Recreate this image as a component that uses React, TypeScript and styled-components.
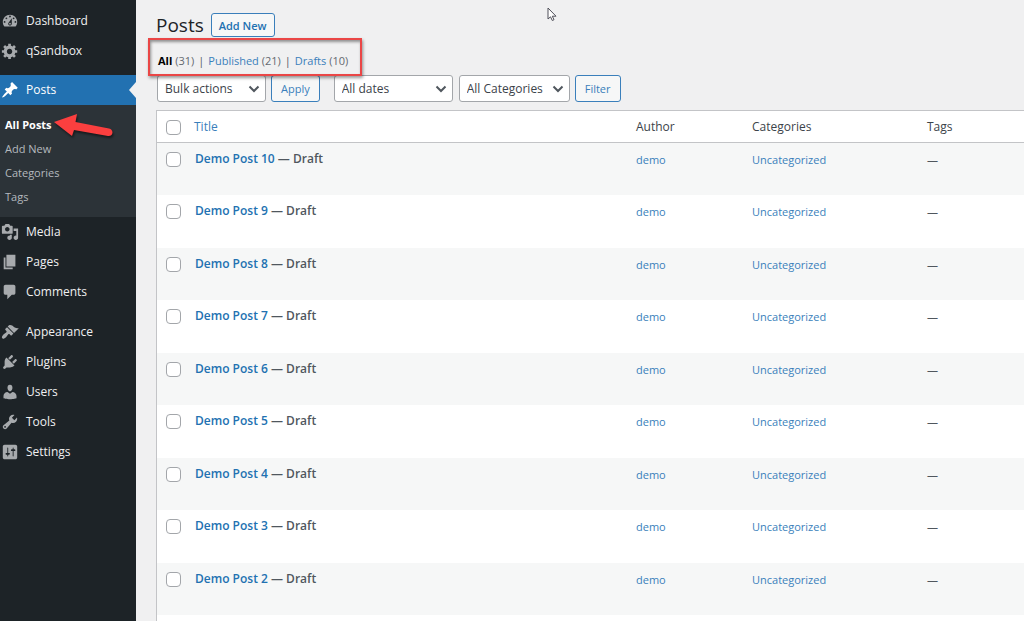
import React from "react";
import styled, { createGlobalStyle, css } from "styled-components";

const GlobalStyle = createGlobalStyle`
  *, *::before, *::after { box-sizing: border-box; }
  body {
    margin: 0;
    background: #f0f0f1;
    color: #50575e;
    font-family: "Open Sans", "Noto Sans", sans-serif;
    font-size: 12px;
    line-height: 18px;
  }
  a { color: #3a7fbb; text-decoration: none; }
`;

const Page = styled.div`
  position: relative;
  display: flex;
  min-height: 100vh;
  overflow: hidden;
`;

const Sidebar = styled.nav`
  flex: none;
  width: 136px;
  padding-top: 6px;
  background: #1d2327;
`;

const Menu = styled.ul`
  list-style: none;
  margin: 0;
  padding: 0;
`;

const MenuItem = styled.li<{ $gap?: number }>`
  margin-top: ${(p) => p.$gap ?? 0}px;
`;

const MenuLink = styled.a<{ $current?: boolean }>`
  position: relative;
  display: flex;
  align-items: center;
  gap: 7px;
  height: 30px;
  padding-left: 1px;
  color: #f0f0f1;
  font-size: 12px;
  svg {
    width: 18px;
    height: 18px;
    fill: #a7aaad;
  }
  ${(p) =>
    p.$current &&
    css`
      background: #2271b1;
      color: #fff;
      svg { fill: #fff; }
      &::after {
        content: "";
        position: absolute;
        top: 7px;
        right: 0;
        border: 8px solid transparent;
        border-left: 0;
        border-right: 7px solid #f0f0f1;
      }
    `}
`;

const SubMenu = styled.ul`
  position: relative;
  list-style: none;
  margin: 0;
  padding: 8px 0;
  background: #2c3338;
`;

const SubItem = styled.li`
  display: flex;
  align-items: center;
  height: 24px;
  padding-left: 5px;
`;

const SubLink = styled.a<{ $current?: boolean }>`
  color: ${(p) => (p.$current ? "#fff" : "#b4b9be")};
  font-size: 11px;
  font-weight: ${(p) => (p.$current ? 700 : 400)};
`;

const Arrow = styled.svg`
  position: absolute;
  top: 6px;
  left: 52px;
  width: 66px;
  height: 32px;
  filter: drop-shadow(1px 2px 1px rgba(0, 0, 0, 0.5));
`;

const Main = styled.main`
  flex: 1;
  display: flex;
  flex-direction: column;
  min-width: 0;
  padding: 12px 0 0 20px;
`;

const Heading = styled.header`
  display: flex;
  align-items: center;
  gap: 7px;
  height: 26px;
`;

const Title = styled.h1`
  margin: 0;
  color: #1d2327;
  font-size: 19px;
  font-weight: 400;
  line-height: 26px;
`;

const AddNew = styled.a`
  height: 24px;
  padding: 0 7px;
  border: 1px solid #3a7fbb;
  border-radius: 3px;
  background: #f6f7f7;
  color: #2271b1;
  font-size: 11px;
  font-weight: 600;
  line-height: 23px;
`;

const Views = styled.nav`
  position: relative;
  align-self: flex-start;
  display: flex;
  gap: 4px;
  margin-top: 14px;
  padding-left: 2px;
  font-size: 11px;
  &::after {
    content: "";
    position: absolute;
    z-index: 1;
    inset: -14px -14px -6px -8px;
    border: 2px solid #ea4646;
    box-shadow: 1px 2px 3px rgba(0, 0, 0, 0.4), inset 1px 2px 3px rgba(0, 0, 0, 0.4);
    pointer-events: none;
  }
`;

const View = styled.span<{ $current?: boolean }>`
  color: #646970;
  a {
    color: ${(p) => (p.$current ? "#000" : "#3a7fbb")};
    font-weight: ${(p) => (p.$current ? 700 : 400)};
  }
`;

const Toolbar = styled.form`
  display: flex;
  margin-top: 5px;
  padding-left: 1px;
`;

const SelectBox = styled.span<{ $width: number; $before?: number }>`
  position: relative;
  width: ${(p) => p.$width}px;
  margin-left: ${(p) => p.$before ?? 0}px;
  svg {
    position: absolute;
    top: 9px;
    right: 6px;
    width: 12px;
    height: 10px;
    pointer-events: none;
  }
`;

const Select = styled.select`
  appearance: none;
  width: 100%;
  height: 27px;
  padding: 0 20px 0 7px;
  border: 1px solid #a3a6aa;
  border-radius: 3px;
  background: #fff;
  color: #3c434a;
  font-family: inherit;
  font-size: 12px;
`;

const Button = styled.button`
  height: 27px;
  margin-left: 5px;
  padding: 0 9px;
  border: 1px solid #3a7fbb;
  border-radius: 3px;
  background: #f6f7f7;
  color: #3a7fbb;
  font-family: inherit;
  font-size: 11px;
`;

const TableCard = styled.div`
  flex: 1;
  margin-top: 8px;
  border: 1px solid #c3c4c7;
  border-width: 1px 0 0 1px;
  background: #fff;
`;

const Table = styled.table`
  width: 100%;
  table-layout: fixed;
  border-collapse: separate;
  border-spacing: 0;
  text-align: left;
`;

const HeadCell = styled.th<{ $width?: number }>`
  width: ${(p) => (p.$width ? `${p.$width}px` : "auto")};
  height: 32px;
  padding: 0 0 0 8px;
  border-bottom: 1px solid #c3c4c7;
  color: #3c434a;
  font-size: 12px;
  font-weight: 400;
`;

const Row = styled.tr`
  height: 52px;
  &:nth-child(odd) { background: #f6f7f7; }
  &:nth-child(even) { height: 53px; }
`;

const Cell = styled.td`
  padding: 8px 0 0 8px;
  font-size: 11px;
  line-height: 18px;
  vertical-align: top;
`;

const TitleCell = styled(Cell)`
  font-size: 12px;
  font-weight: 600;
  padding: 7px 0 0 9px;
  a { color: #2271b1; }
`;

const Checkbox = styled.input`
  appearance: none;
  display: block;
  width: 15px;
  height: 15px;
  margin: 1px 0 0 1px;
  border: 1px solid #a3a6aa;
  border-radius: 4px;
  background: #fff;
`;

const Pointer = styled.svg`
  position: absolute;
  top: 7px;
  left: 547px;
  width: 10px;
  height: 15px;
`;

const icons: Record<string, string> = {
  Dashboard:
    "M3.76 16h12.48c1.1-1.37 1.76-3.11 1.76-5 0-4.42-3.58-8-8-8s-8 3.58-8 8c0 1.89.66 3.63 1.76 5zM10 4c.55 0 1 .45 1 1s-.45 1-1 1-1-.45-1-1 .45-1 1-1zM6 6c.55 0 1 .45 1 1s-.45 1-1 1-1-.45-1-1 .45-1 1-1zm8 0c.55 0 1 .45 1 1s-.45 1-1 1-1-.45-1-1 .45-1 1-1zm-5.37 5.55L12 7v6c0 1.1-.9 2-2 2s-2-.9-2-2c0-.57.24-1.08.63-1.45zM4 10c.55 0 1 .45 1 1s-.45 1-1 1-1-.45-1-1 .45-1 1-1zm12 0c.55 0 1 .45 1 1s-.45 1-1 1-1-.45-1-1 .45-1 1-1zm-5 3c0-.55-.45-1-1-1s-1 .45-1 1 .45 1 1 1 1-.45 1-1z",
  qSandbox:
    "M18 12h-2.18c-.17.7-.44 1.35-.81 1.93l1.54 1.54-2.1 2.1-1.54-1.54c-.58.36-1.23.63-1.91.79V19H8v-2.18c-.68-.16-1.33-.43-1.91-.79l-1.54 1.54-2.12-2.12 1.54-1.54c-.36-.58-.63-1.23-.79-1.91H1V9.03h2.17c.16-.7.44-1.35.8-1.94L2.43 5.55l2.1-2.1 1.54 1.54c.58-.37 1.24-.64 1.93-.81V2h3v2.18c.68.16 1.33.43 1.91.79l1.54-1.54 2.12 2.12-1.54 1.54c.36.59.64 1.24.8 1.94H18V12zm-8.5 1.5c1.66 0 3-1.34 3-3s-1.34-3-3-3-3 1.34-3 3 1.34 3 3 3z",
  Posts:
    "M10.44 3.02l1.82-1.82 6.36 6.35-1.83 1.82c-1.05-.68-2.48-.57-3.41.36l-.75.75c-.92.93-1.04 2.35-.35 3.41l-1.83 1.82-2.41-2.41-2.8 2.79c-.42.42-3.38 2.71-3.8 2.29s1.86-3.39 2.28-3.81l2.79-2.79L4.1 9.36l1.83-1.82c1.05.69 2.48.57 3.4-.36l.75-.75c.93-.92 1.05-2.35.36-3.41z",
  Media:
    "M13 11V4c0-.55-.45-1-1-1h-1.67L9 1H5L3.67 3H2c-.55 0-1 .45-1 1v7c0 .55.45 1 1 1h10c.55 0 1-.45 1-1zM7 4.5c1.38 0 2.5 1.12 2.5 2.5S8.38 9.5 7 9.5 4.5 8.38 4.5 7 5.62 4.5 7 4.5zM14 6h5v10.5c0 1.38-1.12 2.5-2.5 2.5S14 17.88 14 16.5s1.12-2.5 2.5-2.5c.17 0 .34.02.5.05V9h-3V6zm-4 8.05V13h2v3.5c0 1.38-1.12 2.5-2.5 2.5S7 17.88 7 16.5 8.12 14 9.5 14c.17 0 .34.02.5.05z",
  Pages: "M6 15V2h10v13H6zm-1 1h8v2H3V5h2v11z",
  Comments:
    "M5 2h9c1.1 0 2 .9 2 2v7c0 1.1-.9 2-2 2h-2l-5 5v-5H5c-1.1 0-2-.9-2-2V4c0-1.1.9-2 2-2z",
  Appearance:
    "M14.48 11.06L7.41 3.99l1.5-1.5c.5-.56 2.3-.47 3.51.32 1.21.8 1.43 1.28 2.91 2.1 1.18.64 2.45 1.26 4.45.85zm-.71.71L6.7 4.7 4.93 6.47c-.39.39-.39 1.02 0 1.41l1.06 1.06c.39.39.39 1.03 0 1.42-.6.6-1.43 1.11-2.21 1.69-.35.26-.7.53-1.01.84C1.43 14.23.4 16.08 1.4 17.07c.99 1 2.84-.03 4.18-1.36.31-.31.58-.66.85-1.02.57-.78 1.08-1.61 1.69-2.21.39-.39 1.02-.39 1.41 0l1.06 1.06c.39.39 1.02.39 1.41 0z",
  Plugins:
    "M13.11 4.36L9.87 7.6 8 5.73l3.24-3.24c.35-.34 1.05-.2 1.56.32.52.51.66 1.21.31 1.55zm-8 1.77l.91-1.12 9.01 9.01-1.19.84c-.71.71-2.63 1.16-3.82 1.16H6.14L4.9 17.26c-.59.59-1.54.59-2.12 0-.59-.58-.59-1.53 0-2.12l1.24-1.24v-3.88c0-1.13.4-3.19 1.09-3.89zm7.26 3.97l3.24-3.24c.34-.35 1.04-.21 1.55.31.52.51.66 1.21.31 1.55l-3.24 3.25z",
  Users:
    "M10 9.25c-2.27 0-2.73-3.44-2.73-3.44C7 4.02 7.82 2 9.97 2c2.16 0 2.98 2.02 2.71 3.81 0 0-.41 3.44-2.68 3.44zm0 2.57L12.72 10c2.39 0 4.52 2.33 4.52 4.53v2.49s-3.65 1.13-7.24 1.13c-3.65 0-7.24-1.13-7.24-1.13v-2.49c0-2.25 1.94-4.48 4.47-4.48z",
  Tools:
    "M16.68 9.77c-1.34 1.34-3.3 1.67-4.95.99l-5.41 6.52c-.99.99-2.59.99-3.58 0s-.99-2.59 0-3.57l6.52-5.42c-.68-1.65-.35-3.61.99-4.95 1.28-1.28 3.12-1.62 4.72-1.06l-2.89 2.89 2.82 2.82 2.86-2.87c.53 1.58.18 3.39-1.08 4.65zM3.81 16.21c.4.39 1.04.39 1.43 0 .4-.4.4-1.04 0-1.43-.39-.4-1.03-.4-1.43 0-.39.39-.39 1.03 0 1.43z",
  Settings:
    "M18 16V4c0-1.1-.9-2-2-2H4c-1.1 0-2 .9-2 2v12c0 1.1.9 2 2 2h12c1.1 0 2-.9 2-2zM8 11h1c.55 0 1 .45 1 1s-.45 1-1 1H8v1.5c0 .28-.22.5-.5.5s-.5-.22-.5-.5V13H6c-.55 0-1-.45-1-1s.45-1 1-1h1V5.500c0-.28.22-.5.5-.5s.5.22.5.5V11zm5-2h-1c-.55 0-1-.45-1-1s.45-1 1-1h1V5.500c0-.28.22-.5.5-.5s.5.22.5.5V7h1c.55 0 1 .45 1 1s-.45 1-1 1h-1v5.500c0 .28-.22.5-.5.5s-.5-.22-.5-.5V9z",
};

const menu = [
  { name: "Dashboard" },
  { name: "qSandbox" },
  { name: "Posts", gap: 9, children: ["All Posts", "Add New", "Categories", "Tags"] },
  { name: "Media" },
  { name: "Pages" },
  { name: "Comments" },
  { name: "Appearance", gap: 10 },
  { name: "Plugins" },
  { name: "Users" },
  { name: "Tools" },
  { name: "Settings" },
];

const posts = [10, 9, 8, 7, 6, 5, 4, 3, 2].map((n) => `Demo Post ${n}`);

function Dropdown({ label, width, before }: { label: string; width: number; before?: number }) {
  return (
    <SelectBox $width={width} $before={before}>
      <Select aria-label={label}>
        <option>{label}</option>
      </Select>
      <svg viewBox="0 0 12 10" fill="none" stroke="#50575e" strokeWidth="2" aria-hidden="true">
        <path d="M1.5 2.5 6 7l4.500-4.500" />
      </svg>
    </SelectBox>
  );
}

export default function App() {
  return (
    <Page>
      <GlobalStyle />
      <Sidebar aria-label="Main menu">
        <Menu>
          {menu.map(({ name, gap, children }) => (
            <MenuItem key={name} $gap={gap}>
              <MenuLink href="#" $current={!!children}>
                <svg viewBox="0 0 20 20" aria-hidden="true">
                  <path fillRule="evenodd" d={icons[name]} />
                </svg>
                {name}
              </MenuLink>
              {children && (
                <SubMenu>
                  {children.map((child, i) => (
                    <SubItem key={child}>
                      <SubLink href="#" $current={i === 0}>{child}</SubLink>
                    </SubItem>
                  ))}
                  <Arrow viewBox="0 0 66 32" aria-hidden="true">
                    <path
                      fill="#fb3f3f"
                      d="M2 11 25 3 23.500 11 57 17.500C62 18.500 61.500 25.500 56 25L22 19 20 25Z"
                    />
                  </Arrow>
                </SubMenu>
              )}
            </MenuItem>
          ))}
        </Menu>
      </Sidebar>
      <Main>
        <Heading>
          <Title>Posts</Title>
          <AddNew href="#">Add New</AddNew>
        </Heading>
        <Views aria-label="Filter by status">
          <View $current><a href="#">All</a> (31)</View>
          <span>|</span>
          <View><a href="#">Published</a> (21)</View>
          <span>|</span>
          <View><a href="#">Drafts</a> (10)</View>
        </Views>
        <Toolbar onSubmit={(e) => e.preventDefault()}>
          <Dropdown label="Bulk actions" width={109} />
          <Button>Apply</Button>
          <Dropdown label="All dates" width={119} before={14} />
          <Dropdown label="All Categories" width={111} before={6} />
          <Button>Filter</Button>
        </Toolbar>
        <TableCard>
          <Table>
            <thead>
              <tr>
                <HeadCell $width={29}><Checkbox type="checkbox" aria-label="Select all" /></HeadCell>
                <HeadCell><a href="#">Title</a></HeadCell>
                <HeadCell $width={116}>Author</HeadCell>
                <HeadCell $width={175}>Categories</HeadCell>
                <HeadCell $width={105}>Tags</HeadCell>
              </tr>
            </thead>
            <tbody>
              {posts.map((post) => (
                <Row key={post}>
                  <Cell><Checkbox type="checkbox" aria-label={`Select ${post}`} /></Cell>
                  <TitleCell><a href="#">{post}</a> — Draft</TitleCell>
                  <Cell><a href="#">demo</a></Cell>
                  <Cell><a href="#">Uncategorized</a></Cell>
                  <Cell>—</Cell>
                </Row>
              ))}
            </tbody>
          </Table>
        </TableCard>
      </Main>
      <Pointer viewBox="0 0 10 15" aria-hidden="true">
        <path d="M1 1v11l2.500-2.200 1.800 3.700 1.700-.8-1.700-3.500H9z" fill="#fff" stroke="#50505a" />
      </Pointer>
    </Page>
  );
}
